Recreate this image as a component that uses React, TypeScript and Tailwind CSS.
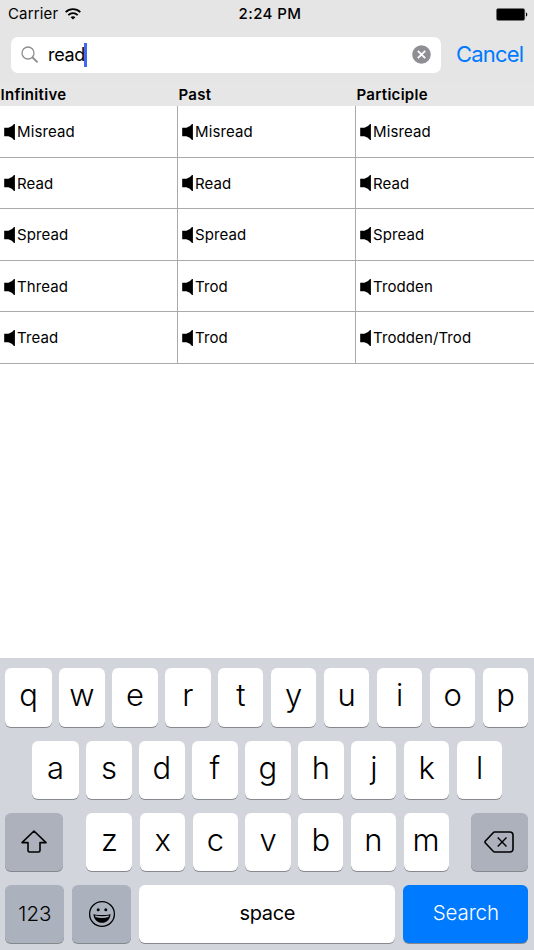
import React from 'react';

interface Verb {
  infinitive: string;
  past: string;
  participle: string;
}

const VERBS: Verb[] = [
  { infinitive: 'Misread', past: 'Misread', participle: 'Misread' },
  { infinitive: 'Read', past: 'Read', participle: 'Read' },
  { infinitive: 'Spread', past: 'Spread', participle: 'Spread' },
  { infinitive: 'Thread', past: 'Trod', participle: 'Trodden' },
  { infinitive: 'Tread', past: 'Trod', participle: 'Trodden/Trod' },
];

const KEY_SHADOW = 'rounded-[6px] shadow-[0_1px_0.5px_#85888d]';

const WifiIcon = () => (
  <svg width="16" height="12" viewBox="0 0 16 12" fill="none" stroke="#000" strokeWidth="1.8">
    <path d="M0.7 4.2C4.7 0.2 11.3 0.2 15.3 4.2" />
    <path d="M3.3 7.1C6 4.5 10 4.5 12.7 7.1" />
    <path d="M8 11.6L5.6 9.2C6.9 8 9.1 8 10.4 9.2Z" fill="#000" stroke="none" />
  </svg>
);

const BatteryIcon = () => (
  <svg width="32" height="13" viewBox="0 0 32 13">
    <rect x="0.4" y="0.4" width="28.4" height="12.2" rx="2" fill="#000" stroke="#777" strokeWidth="0.6" />
    <path d="M30 4.5C31.7 5 31.7 8 30 8.5Z" fill="#000" />
  </svg>
);

const SearchIcon = () => (
  <svg width="18" height="18" viewBox="0 0 18 18" fill="none" stroke="#8e8e93">
    <circle cx="7" cy="7" r="6" strokeWidth="1.3" />
    <path d="M11.3 11.3L16.6 16.4" strokeWidth="1.9" />
  </svg>
);

const ClearIcon = () => (
  <svg width="19" height="19" viewBox="0 0 19 19">
    <circle cx="9.5" cy="9.5" r="9.3" fill="#8e8e93" />
    <path d="M5.8 5.8L13.2 13.2M13.2 5.8L5.8 13.2" stroke="#fff" strokeWidth="1.8" />
  </svg>
);

const SpeakerIcon = () => (
  <svg className="shrink-0" width="11" height="16" viewBox="0 0 11 16">
    <path d="M0.2 3.8H4.4Q8.4 2.6 10 0H10.9V16H10Q8.4 13.4 4.4 12.2H0.2Z" fill="#000" />
  </svg>
);

const ShiftIcon = () => (
  <svg width="26" height="23" viewBox="0 0 26 23" fill="none" stroke="#000" strokeWidth="1.6" strokeLinejoin="round">
    <path d="M13 1L25 12.6H19V20.4Q19 22 17.4 22H8.6Q7 22 7 20.4V12.6H1Z" />
  </svg>
);

const DeleteIcon = () => (
  <svg width="30" height="22" viewBox="0 0 30 22" fill="none" stroke="#000" strokeWidth="1.6" strokeLinejoin="round">
    <path d="M10.6 1H25.7Q29 1 29 4.3V17.7Q29 21 25.7 21H10.6Q9.9 21 9.2 20.3L1.4 12Q0.5 11 1.4 10L9.2 1.7Q9.9 1 10.6 1Z" />
    <path d="M13.7 6.6L22.5 15.4M22.5 6.6L13.7 15.4" strokeWidth="1.4" />
  </svg>
);

const EmojiIcon = () => (
  <svg width="28" height="28" viewBox="0 0 28 28">
    <circle cx="14" cy="14" r="12.4" fill="none" stroke="#000" strokeWidth="1.3" />
    <circle cx="10.2" cy="9.7" r="1.5" />
    <circle cx="17.8" cy="9.7" r="1.5" />
    <path d="M5.4 14.2C10.8 15.4 17.2 15.4 22.6 14.2C22.2 19.4 18.6 22.8 14 22.8C9.4 22.8 5.8 19.4 5.4 14.2Z" />
    <path d="M6.9 15.5C11.4 16.4 16.6 16.4 21.1 15.5L20.5 17C16.2 18.2 11.8 18.2 7.5 17Z" fill="#adb3be" />
  </svg>
);

const LetterKeys = ({ letters }: { letters: string }) => (
  <>
    {letters.split('').map((letter) => (
      <button
        key={letter}
        className={`h-full min-w-0 flex-1 bg-white pb-[5px] text-[31px] leading-none font-light first:flex-[1.02] ${KEY_SHADOW}`}
      >
        {letter}
      </button>
    ))}
  </>
);

const Cell = ({ word, last }: { word: string; last?: boolean }) => (
  <div className={`flex h-full items-center gap-[2px] pt-[1px] pl-[4px] text-[15px] tracking-[0.1px] ${last ? '' : 'border-r border-[#aaa]'}`}>
    <SpeakerIcon />
    <span className="pt-px">{word}</span>
  </div>
);

const VerbTable = () => (
  <div>
    <div className="grid h-[23px] grid-cols-[178px_178px_178px] items-center bg-[#e6e6e6] pl-[0.5px] text-[15px] leading-[23px] font-semibold tracking-[0.3px]">
      <span>Infinitive</span>
      <span>Past</span>
      <span>Participle</span>
    </div>
    {VERBS.map((verb) => (
      <div key={verb.infinitive} className="grid h-[51.6px] grid-cols-[178px_178px_178px] items-stretch border-b border-[#aaa]">
        <Cell word={verb.infinitive} />
        <Cell word={verb.past} />
        <Cell word={verb.participle} last />
      </div>
    ))}
  </div>
);

const Keyboard = () => (
  <div className="flex h-[292px] flex-col gap-[14px] bg-[#d2d5dc] pt-[10.4px]">
    <div className="flex h-[58.2px] gap-[7.6px] pr-[5.8px] pl-[5.4px]">
      <LetterKeys letters="qwertyuiop" />
    </div>
    <div className="flex h-[58.2px] gap-[7.6px] pr-[31.6px] pl-[32.4px]">
      <LetterKeys letters="asdfghjkl" />
    </div>
    <div className="flex h-[58.2px] pr-[5.8px] pl-[5.4px]">
      <button className={`flex w-[58px] items-center justify-center bg-[#adb1bc] ${KEY_SHADOW}`} aria-label="Shift">
        <ShiftIcon />
      </button>
      <div className="ml-[23.1px] flex w-[362.2px] gap-[7.6px]">
        <LetterKeys letters="zxcvbnm" />
      </div>
      <button className={`ml-auto flex w-[57.5px] items-center justify-center bg-[#adb1bc] ${KEY_SHADOW}`} aria-label="Delete">
        <DeleteIcon />
      </button>
    </div>
    <div className="flex h-[58.2px] gap-[8px] pr-[5.8px] pl-[5.4px]">
      <button className={`w-[59px] bg-[#abb1bd] text-[20.5px] font-light ${KEY_SHADOW}`}>123</button>
      <button className={`flex w-[58.8px] items-center justify-center bg-[#abb1bd] ${KEY_SHADOW}`} aria-label="Emoji">
        <EmojiIcon />
      </button>
      <button className={`flex-1 bg-white pb-[3px] text-[20px] tracking-[-0.3px] ${KEY_SHADOW}`}>space</button>
      <button className={`w-[124.8px] bg-[#007aff] pb-[2px] text-[20.5px] font-light tracking-[-0.1px] text-white ${KEY_SHADOW}`}>
        Search
      </button>
    </div>
  </div>
);

export default function App() {
  return (
    <div className="flex h-[950px] w-[534px] flex-col overflow-hidden bg-white font-['Inter',sans-serif] text-black">
      <div className="grid h-[28px] grid-cols-3 items-center bg-[#e5e5e5] pr-[6px] pl-[8px] text-[15px]">
        <div className="flex items-center gap-[7px]">
          <span className="tracking-[0.15px]">Carrier</span>
          <WifiIcon />
        </div>
        <span className="pl-[4px] text-center font-medium tracking-[0.4px]">2:24 PM</span>
        <div className="flex justify-end">
          <BatteryIcon />
        </div>
      </div>
      <div className="flex h-[55px] items-center bg-[#e5e5e5] pb-[2px] pl-[11px]">
        <div className="flex h-[36px] w-[430px] shrink-0 items-center rounded-[7px] bg-white px-[10px]">
          <SearchIcon />
          <span className="ml-[9px] text-[18px] tracking-[-0.3px]">read</span>
          <span className="-ml-px h-[24px] w-[2.5px] bg-[#4169f0]" />
          <span className="ml-auto">
            <ClearIcon />
          </span>
        </div>
        <button className="ml-[15px] text-[22px] tracking-[-0.8px] text-[#007aff]">Cancel</button>
      </div>
      <VerbTable />
      <div className="flex-1" />
      <Keyboard />
    </div>
  );
}
